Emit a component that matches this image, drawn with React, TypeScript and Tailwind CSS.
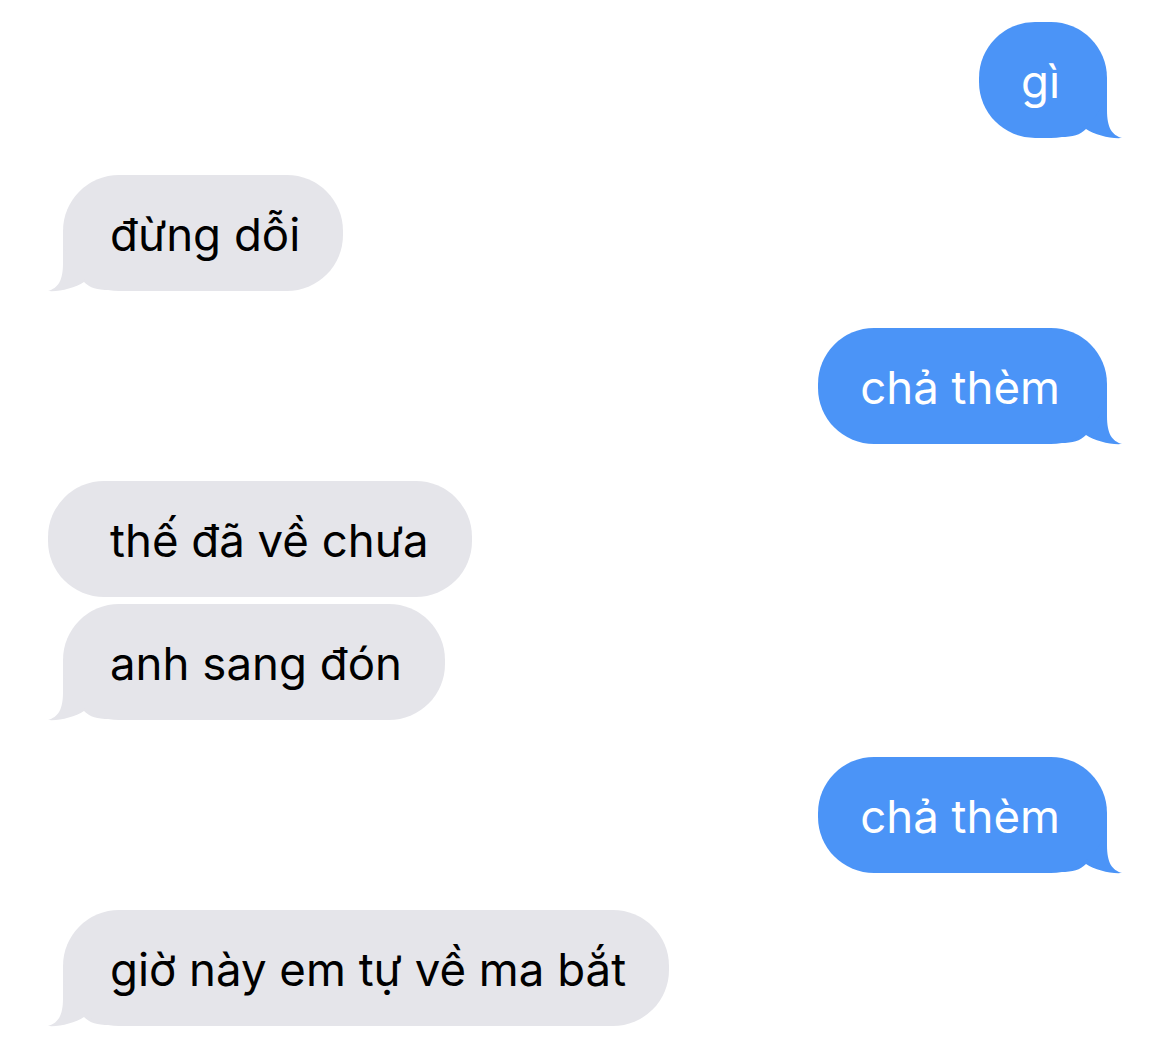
import React from "react";

type Msg = { id: number; text: string; mine: boolean; tail: boolean; gap: "group" | "tight" | "none" };

const messages: Msg[] = [
  { id: 1, text: "gì", mine: true, tail: true, gap: "none" },
  { id: 2, text: "đừng dỗi", mine: false, tail: true, gap: "group" },
  { id: 3, text: "chả thèm", mine: true, tail: true, gap: "group" },
  { id: 4, text: "thế đã về chưa", mine: false, tail: false, gap: "group" },
  { id: 5, text: "anh sang đón", mine: false, tail: true, gap: "tight" },
  { id: 6, text: "chả thèm", mine: true, tail: true, gap: "group" },
  { id: 7, text: "giờ này em tự về ma bắt", mine: false, tail: true, gap: "group" },
];

// tail drawn relative to the bubble's bottom-right corner (0,0)
function Tail({ mine }: { mine: boolean }) {
  return (
    <svg
      width="62"
      height="57"
      viewBox="-46 -56 62 57"
      className={
        mine
          ? "pointer-events-none absolute -right-[16px] -bottom-[1px]"
          : "pointer-events-none absolute -left-[16px] -bottom-[1px] -scale-x-100"
      }
      aria-hidden
    >
      <path
        d="M -46 -56 L 0 -56 L 0 -28 C 0 -10 5 -3 15 0 C 4 1 -12 -3 -21 -9 C -27 -3 -34 -1 -46 -1 Z"
        fill={mine ? "#4b94f7" : "#e5e5ea"}
      />
    </svg>
  );
}

function Bubble({ msg }: { msg: Msg }) {
  const gapClass = msg.gap === "group" ? "mt-[37px]" : msg.gap === "tight" ? "mt-[7px]" : "";
  if (msg.mine) {
    return (
      <div className={`relative mr-[63px] self-end ${gapClass}`}>
        <div className="relative z-10 flex h-[116px] items-center rounded-[56px] bg-[#4b94f7] pl-[42px] pr-[47px] text-white">
          <span className="pt-[3px]">{msg.text}</span>
        </div>
        {msg.tail && <Tail mine />}
      </div>
    );
  }
  return (
    <div className={`relative self-start ${msg.tail ? "ml-[63px]" : "ml-[48px]"} ${gapClass}`}>
      <div
        className={`relative z-10 flex h-[116px] items-center rounded-[56px] bg-[#e5e5ea] pr-[43px] text-black ${
          msg.tail ? "pl-[47px]" : "pl-[62px]"
        }`}
      >
        <span className="pt-[3px]">{msg.text}</span>
      </div>
      {msg.tail && <Tail mine={false} />}
    </div>
  );
}

export default function App() {
  return (
    <div className="min-h-[1046px] w-[1170px] bg-white font-['Inter','Noto_Sans',sans-serif] text-[45.6px] leading-none">
      <div className="flex flex-col pt-[22px]">
        {messages.map((m) => (
          <Bubble key={m.id} msg={m} />
        ))}
      </div>
    </div>
  );
}
